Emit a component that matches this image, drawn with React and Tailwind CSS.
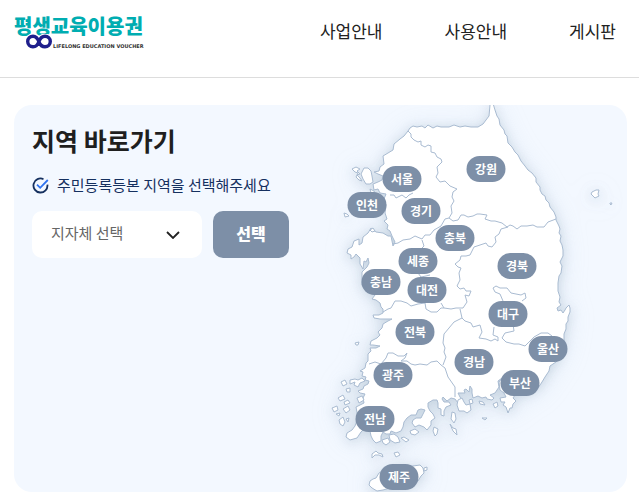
import React, { useState } from "react";

const menus = ["사업안내", "사용안내", "게시판"];

// x, y: center of each label on the map
const regions = [
  { name: "강원", x: 156, y: 64 },
  { name: "서울", x: 72, y: 74 },
  { name: "인천", x: 37, y: 100 },
  { name: "경기", x: 91, y: 106 },
  { name: "충북", x: 125, y: 133 },
  { name: "세종", x: 88, y: 156 },
  { name: "경북", x: 187, y: 161 },
  { name: "충남", x: 51, y: 177 },
  { name: "대전", x: 97, y: 185 },
  { name: "대구", x: 178, y: 209 },
  { name: "전북", x: 85, y: 227 },
  { name: "울산", x: 218, y: 244 },
  { name: "경남", x: 144, y: 257 },
  { name: "부산", x: 190, y: 278 },
  { name: "광주", x: 63, y: 270 },
  { name: "전남", x: 45, y: 314 },
  { name: "제주", x: 69, y: 372 },
];

const mainland =
  "M493.5 100 L493.5 105 495 110 497 116 499 119 500 125 504 130 505 134 507 136 508 143 512 147 515 152 518 155 521 161 525 166 528 170 532 173 536 178 536 182 540 187 540 190 542 194 545 196 546 200 549 203 550 207 554 212 556 217 556 220 559 226 560 229 559 233 561 236 560 241 562 245 563 250 563 256 560 262 562 266 561 273 559 276 558 283 558 291 560 297 559 302 561 305 557 308 558 311 561 310 563 313 565 310 566 308 569 305 570 308 570 312 568 317 568 321 566 324 566 329 564 334 564 345 558 360 556 362 550 366 549 371 545 377 542 382 538 388 525 394 515 395 513 398 516 401 513 404 512 408 510 408 508 413 506 407 503 405 505 402 501 402 500 398 506 397 504 393 500 390 499 382 502 378 498 381 499 387 495 393 490 395 494 398 492 400 487 399 486 397 482 398 478 396 473 398 472 393 472 389 470 386 469 392 466 389 464 390 465 393 458 393 460 397 462 400 458 403 455 399 451 398 447 401 443 397 442 399 444 402 449 402 451 405 446 407 444 411 444 416 441 415 441 409 438 408 438 403 437 400 433 400 428 403 428 407 430 411 433 414 435 418 431 421 431 425 427 430 424 427 419 425 415 427 412 423 413 420 416 418 421 418 423 414 425 410 421 409 418 410 416 415 411 415 407 418 404 422 403 427 401 431 396 433 391 431 390 434 386 434 383 432 381 436 381 441 376 443 373 440 371 436 370 431 364 429 361 432 357 438 350 440 346 437 347 433 352 430 355 426 358 418 356 407 364 403 363 398 365 394 360 393 358 391 363 389 364 386 368 384 369 381 365 380 366 377 362 376 363 372 360 371 365 368 366 363 368 361 368 354 371 351 370 348 376 348 380 346 373 345 370 345 371 341 377 338 380 335 378 332 382 328 383 324 388 321 392 319 380 319 374 318 373 315 379 315 383 313 383 309 381 307 380 303 376 300 372 299 375 295 367 292 362 285 362 272 367 267 369 263 368 258 366 262 364 261 363 269 360 264 360 258 356 254 354 257 351 259 351 255 347 253 348 249 352 247 354 241 359 239 359 245 362 243 363 237 368 233 371 228 376 232 383 233 388 236 391 236 393 246 395 242 392 236 390 231 387 229 388 225 384 221 387 219 385 213 386 205 384 199 386 194 380 193 378 189 374 190 373 184 378 182 382 180 383 176 378 174 374 172 379 171 380 167 384 164 383 156 388 153 393 150 394 144 400 139 404 136 408 131 410 128 413 126 417 127 422 126 425 128 428 125 433 128 437 126 441 127 449 127 454 125 460 127 465 126 471 127 478 127 483 124 486 120 489 116 490 105 490 100 Z";

const jeju =
  "M369 485 L370 481 373 479 376 478 379 473 386 469 399 466 413 466 420 465 423 468 424 473 421 476 418 481 412 485 400 489 390 488 383 490 377 491 372 488 Z";

const islands = [
  "M364 168 L368 168 371 171 372 176 373 182 370 184 366 184 363 179 361 174 Z",
  "M352 169 L356 167 360 169 357 171 360 174 357 175 360 178 362 181 359 180 356 177 358 173 355 172 Z",
  "M370 189 L374 191 376 195 371 193 Z",
  "M344 213 L347 214 349 216 345 217 Z",
  "M370 230 L373 228 375 231 372 232 Z",
  "M355 343 L359 342 358 345 356 345 Z",
  "M341 382 L345 380 347 384 343 386 Z",
  "M350 380 L355 379 358 380 362 378 365 381 360 383 358 387 354 385 355 382 350 384 Z",
  "M346 389 L350 388 350 392 347 392 Z",
  "M338 398 L343 395 345 399 340 401 Z",
  "M344 402 L348 400 350 403 345 405 Z",
  "M332 408 L337 406 338 410 334 412 Z",
  "M336 414 L340 413 339 416 Z",
  "M343 409 L348 406 350 410 346 413 Z",
  "M339 420 L343 417 345 422 343 426 340 424 Z",
  "M346 419 L349 418 348 422 Z",
  "M357 398 L362 396 364 400 359 403 Z",
  "M382 440 L388 438 390 442 386 445 383 443 Z",
  "M389 435 L394 434 398 437 400 442 395 443 390 440 Z",
  "M401 438 L404 437 409 440 406 442 Z",
  "M372 454 L376 451 378 453 382 454 383 457 379 455 375 455 372 458 Z",
  "M394 453 L398 452 400 455 396 457 Z",
  "M410 431 L415 429 419 432 415 435 411 434 Z",
  "M434 427 L438 429 437 434 435 436 433 431 Z",
  "M452 412 L455 413 456 419 454 423 451 419 Z",
  "M450 424 L453 428 456 429 457 435 453 431 Z",
  "M458 400 L462 398 464 402 466 405 470 404 471 410 467 413 464 411 459 411 457 405 Z",
  "M469 400 L472 399 473 403 470 404 Z",
  "M479 401 L483 402 485 405 480 404 Z",
  "M493 404 L497 402 498 406 495 408 Z",
  "M482 418 L487 418 485 420 Z",
  "M424 468 L427 467 427 470 424 471 Z",
  "M591 194 L592 192 596 190 599 190 598 194 599 196 595 198 Z",
  "M610 203 L612 203 611 205 610 204 Z",
];

const borders = [
  "M408 131 L411 134 411 137 414 140 418 142 421 141 421 145 425 147 428 145 431 146 431 152 435 153 437 157 441 159 442 162 437 167 438 173 436 177 440 182 445 181 450 186 457 189 453 192 452 197 454 201 451 206 452 213 449 218 453 221 458 220 461 215 464 215 468 217 473 216 477 214 480 214 487 215 485 219 491 221 495 221 502 223 507 227 510 225 513 226 517 229 521 226 527 226 533 225 537 227 544 227 548 222 556 219",
  "M508 227 L501 229 499 234 495 237 496 242 492 247 488 246 486 243 480 245 474 247 470 255 466 256 461 256 460 260 455 264 458 267 461 268 459 273 460 280 457 286 460 289 464 288 466 291 471 291 469 296 465 295 467 302 463 308 456 308 451 309 444 308 441 303",
  "M449 218 L445 219 441 226 434 230 430 235 425 235 422 239 415 236 410 239 403 240 398 243 393 244",
  "M422 240 L424 246 420 250",
  "M383 312 L388 309 391 308 395 301 401 301 407 303 411 306 418 304 425 303 426 309 431 312 437 312 441 308 444 308",
  "M418 273 L421 277 426 276 430 275",
  "M460 309 L462 318 454 322 449 328 444 334 443 343 445 348 444 352 446 357 443 365",
  "M462 318 L465 321 471 323 473 327 480 325 482 332 479 338 486 339 491 341 495 339 498 341 498 337 493 335 494 327",
  "M503 301 L500 294 495 292 493 288 496 286 500 288 507 288 511 293 516 294 521 295 525 293 526 298 522 301",
  "M513 324 L514 331 505 333 502 338 506 342 514 344 519 344 525 346 530 341 534 337 541 333 548 333 552 336",
  "M369 364 L375 362 381 364 386 358 388 353 393 353 398 356 404 356 407 353 405 358 401 361 407 361 411 364 415 365 420 364 427 365 431 362 437 361 441 365 445 368 448 377 455 387 455 397",
  "M390 195 L394 195 396 198 402 195 406 198 409 195 413 193",
];

function Logo() {
  return (
    <a href="#" className="relative block whitespace-nowrap">
      <span className="block text-[20px] leading-6 font-black text-[#00adb1]">평생교육이용권</span>
      <svg className="absolute top-5 left-3" width="26" height="15" viewBox="0 0 26 15">
        <g fill="none" stroke="#fff" strokeWidth="5.500">
          <circle cx="7" cy="7.500" r="5.300" />
          <circle cx="19" cy="7.500" r="5.300" />
        </g>
        <path
          d="M13 8C11.800 4.500 10.200 2.200 7 2.200A5.300 5.300 0 0 0 7 12.800C10.200 12.800 11.800 10.800 13 7.500S15.800 2.200 19 2.200A5.300 5.300 0 0 1 19 12.800C15.800 12.800 14.200 11 13 8Z"
          fill="none"
          stroke="#1f1f8c"
          strokeWidth="3.400"
        />
      </svg>
      <span className="block pt-1 pl-[39px] font-['DejaVu_Sans',sans-serif] text-[5px] leading-2 font-bold text-[#333]">
        LIFELONG EDUCATION VOUCHER
      </span>
    </a>
  );
}

function KoreaMap({ onSelect }) {
  return (
    <div className="relative ml-auto w-[297px] shrink-0">
      <svg className="block w-full overflow-visible" viewBox="330 105 297 387">
        <defs>
          <filter id="sea" x="-30%" y="-20%" width="160%" height="140%" colorInterpolationFilters="sRGB">
            <feDropShadow dx="0" dy="2" stdDeviation="6" floodColor="#8ba3b8" floodOpacity="0.35" />
            <feDropShadow dx="0" dy="2" stdDeviation="12" floodColor="#a3bcd4" floodOpacity="0.2" />
          </filter>
        </defs>
        <g fill="#fff" stroke="#a9bbd1" strokeWidth="1" strokeLinejoin="round" filter="url(#sea)">
          <path d={mainland} />
          <path d={jeju} />
          {islands.map((d) => (
            <path key={d} d={d} />
          ))}
        </g>
        <g fill="none" stroke="#a9bbd1" strokeWidth="1" strokeLinejoin="round">
          {borders.map((d) => (
            <path key={d} d={d} />
          ))}
        </g>
      </svg>
      {regions.map((region) => (
        <button
          key={region.name}
          type="button"
          className="absolute h-[26px] w-[39px] -translate-x-1/2 -translate-y-1/2 rounded-full bg-[#7d8fa7] text-center text-[12px] font-bold text-white hover:bg-[#1c3f94]"
          style={{ left: region.x, top: region.y }}
          onClick={() => onSelect(region.name)}
        >
          {region.name}
        </button>
      ))}
    </div>
  );
}

const App = () => {
  const [selected, setSelected] = useState("");

  return (
    <div className="font-['Noto_Sans_CJK_KR',sans-serif]">
      <header className="flex items-start justify-between border-b border-[#ddd] pt-3.5 pr-[23px] pb-[27px] pl-3.5">
        <Logo />
        <nav className="flex gap-[62px] pt-[3px]">
          {menus.map((menu) => (
            <a key={menu} href="#" className="text-[17px] leading-7 whitespace-nowrap text-[#222]">
              {menu}
            </a>
          ))}
        </nav>
      </header>

      <main className="pt-[27px] pr-3 pb-2 pl-3.5">
        <section className="flex overflow-hidden rounded-[18px] bg-[#f3f8ff]">
          <div className="z-10 shrink-0 pt-[15px] pl-[18px]">
            <h2 className="text-[25px] leading-10 font-bold text-[#1f1f1f]">지역 바로가기</h2>
            <label
              htmlFor="region"
              className="mt-[13px] flex items-center gap-2 text-[15px] leading-6 text-[#15305f]"
            >
              <svg width="17" height="17" viewBox="0 0 17 17" fill="none" strokeWidth="1.800">
                <path d="M11.500 2.200A7 7 0 1 0 15.400 7.600" stroke="#15305f" />
                <path d="M5 7.600L8.200 10.800L15.800 3" stroke="#2f73f0" />
              </svg>
              주민등록등본 지역을 선택해주세요
            </label>
            <form className="mt-3.5 flex gap-[11px]" onSubmit={(e) => e.preventDefault()}>
              <div className="relative">
                <select
                  id="region"
                  className="h-[47px] w-[170px] appearance-none rounded-[10px] bg-white pr-10 pb-0.5 pl-[19px] text-[15px] text-[#666]"
                  value={selected}
                  onChange={(e) => setSelected(e.target.value)}
                >
                  <option value="">지자체 선택</option>
                  {regions.map((region) => (
                    <option key={region.name} value={region.name}>
                      {region.name}
                    </option>
                  ))}
                </select>
                <svg
                  className="pointer-events-none absolute top-5 right-[22px]"
                  width="14"
                  height="8"
                  viewBox="0 0 14 8"
                  fill="none"
                  stroke="#222"
                  strokeWidth="1.800"
                >
                  <path d="M1 1L7 7L13 1" />
                </svg>
              </div>
              <button
                type="submit"
                className="h-[47px] w-[76px] rounded-[10px] bg-[#7d8fa7] pb-1 text-[16px] font-black text-white"
              >
                선택
              </button>
            </form>
          </div>
          <KoreaMap onSelect={setSelected} />
        </section>
      </main>
    </div>
  );
};

export default App;
